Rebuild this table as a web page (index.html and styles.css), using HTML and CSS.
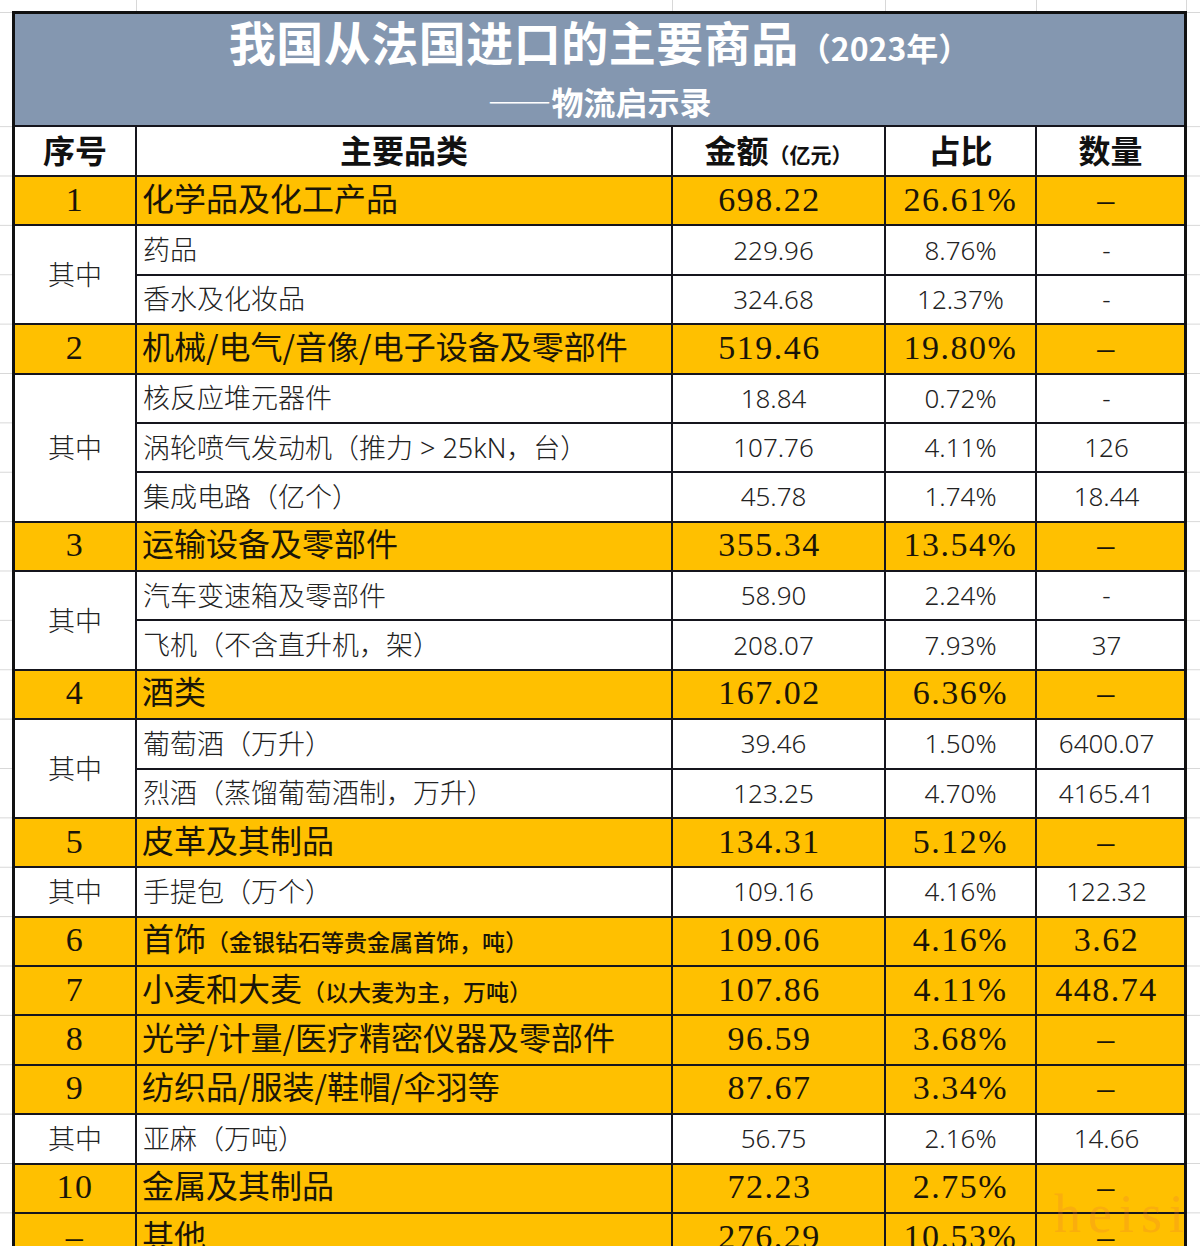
FILE: index.html
```html
<!DOCTYPE html>
<html lang="zh-CN">
<head>
<meta charset="utf-8">
<title>我国从法国进口的主要商品（2023年）</title>
<link rel="stylesheet" href="styles.css">
</head>
<body>
<div class="sheet">
  <div class="topstrip">
    <span class="g1"></span><span class="g2"></span><span class="g3"></span><span class="g4"></span><span class="g5"></span>
  </div>
  <table class="report">
    <colgroup>
      <col class="w1"><col class="w2"><col class="w3"><col class="w4"><col class="w5">
    </colgroup>
    <thead>
      <tr class="title-row">
        <th colspan="5">
          <div class="title">我国从法国进口的主要商品<span class="year">（2023年）</span></div>
          <div class="subtitle">——物流启示录</div>
        </th>
      </tr>
      <tr class="head-row">
        <th>序号</th>
        <th>主要品类</th>
        <th>金额<span class="unit">（亿元）</span></th>
        <th>占比</th>
        <th>数量</th>
      </tr>
    </thead>
    <tbody>
      <tr class="major"><td class="idx">1</td><td class="name">化学品及化工产品</td><td class="num amt">698.22</td><td class="num">26.61%</td><td class="num qty">–</td></tr>
      <tr class="sub"><td class="qz" rowspan="2">其中</td><td class="name">药品</td><td class="num amt">229.96</td><td class="num">8.76%</td><td class="num qty">-</td></tr>
      <tr class="sub"><td class="name">香水及化妆品</td><td class="num amt">324.68</td><td class="num">12.37%</td><td class="num qty">-</td></tr>

      <tr class="major"><td class="idx">2</td><td class="name">机械/电气/音像/电子设备及零部件</td><td class="num amt">519.46</td><td class="num">19.80%</td><td class="num qty">–</td></tr>
      <tr class="sub"><td class="qz" rowspan="3">其中</td><td class="name">核反应堆元器件</td><td class="num amt">18.84</td><td class="num">0.72%</td><td class="num qty">-</td></tr>
      <tr class="sub"><td class="name">涡轮喷气发动机（推力 &gt; 25kN，台）</td><td class="num amt">107.76</td><td class="num">4.11%</td><td class="num qty">126</td></tr>
      <tr class="sub"><td class="name">集成电路（亿个）</td><td class="num amt">45.78</td><td class="num">1.74%</td><td class="num qty">18.44</td></tr>

      <tr class="major"><td class="idx">3</td><td class="name">运输设备及零部件</td><td class="num amt">355.34</td><td class="num">13.54%</td><td class="num qty">–</td></tr>
      <tr class="sub"><td class="qz" rowspan="2">其中</td><td class="name">汽车变速箱及零部件</td><td class="num amt">58.90</td><td class="num">2.24%</td><td class="num qty">-</td></tr>
      <tr class="sub"><td class="name">飞机（不含直升机，架）</td><td class="num amt">208.07</td><td class="num">7.93%</td><td class="num qty">37</td></tr>

      <tr class="major"><td class="idx">4</td><td class="name">酒类</td><td class="num amt">167.02</td><td class="num">6.36%</td><td class="num qty">–</td></tr>
      <tr class="sub"><td class="qz" rowspan="2">其中</td><td class="name">葡萄酒（万升）</td><td class="num amt">39.46</td><td class="num">1.50%</td><td class="num qty">6400.07</td></tr>
      <tr class="sub"><td class="name">烈酒（蒸馏葡萄酒制，万升）</td><td class="num amt">123.25</td><td class="num">4.70%</td><td class="num qty">4165.41</td></tr>

      <tr class="major"><td class="idx">5</td><td class="name">皮革及其制品</td><td class="num amt">134.31</td><td class="num">5.12%</td><td class="num qty">–</td></tr>
      <tr class="sub"><td class="qz">其中</td><td class="name">手提包（万个）</td><td class="num amt">109.16</td><td class="num">4.16%</td><td class="num qty">122.32</td></tr>

      <tr class="major"><td class="idx">6</td><td class="name">首饰<span class="note">（金银钻石等贵金属首饰，吨）</span></td><td class="num amt">109.06</td><td class="num">4.16%</td><td class="num qty">3.62</td></tr>
      <tr class="major"><td class="idx">7</td><td class="name">小麦和大麦<span class="note">（以大麦为主，万吨）</span></td><td class="num amt">107.86</td><td class="num">4.11%</td><td class="num qty">448.74</td></tr>
      <tr class="major"><td class="idx">8</td><td class="name">光学/计量/医疗精密仪器及零部件</td><td class="num amt">96.59</td><td class="num">3.68%</td><td class="num qty">–</td></tr>
      <tr class="major"><td class="idx">9</td><td class="name">纺织品/服装/鞋帽/伞羽等</td><td class="num amt">87.67</td><td class="num">3.34%</td><td class="num qty">–</td></tr>
      <tr class="sub"><td class="qz">其中</td><td class="name">亚麻（万吨）</td><td class="num amt">56.75</td><td class="num">2.16%</td><td class="num qty">14.66</td></tr>

      <tr class="major"><td class="idx">10</td><td class="name">金属及其制品</td><td class="num amt">72.23</td><td class="num">2.75%</td><td class="num qty">–</td></tr>
      <tr class="major"><td class="idx">–</td><td class="name">其他</td><td class="num amt">276.29</td><td class="num">10.53%</td><td class="num qty">–</td></tr>
    </tbody>
  </table>
  <div class="watermark">heisi</div>
</div>
</body>
</html>
```

FILE: styles.css
```css
* { box-sizing: border-box; }

html, body {
  margin: 0;
  padding: 0;
}

body {
  width: 1200px;
  height: 1246px;
  overflow: hidden;
  background: #fff;
  font-family: "Noto Sans CJK SC", "Noto Sans", sans-serif;
  color: #111;
}

.sheet {
  position: relative;
  height: 1246px;
  background-image:
    linear-gradient(#d8d8d8, #d8d8d8),
    linear-gradient(#fff, #fff),
    linear-gradient(to bottom, transparent 48.38px, #d8d8d8 48.38px);
  background-size: 100% 1px, 100% 125px, 100% 49.38px;
  background-position: 0 12px, 0 0, 0 -21.02px;
  background-repeat: no-repeat, no-repeat, repeat;
}

/* spreadsheet gridlines above the table */
.topstrip {
  display: flex;
  height: 11px;
}
.topstrip span {
  height: 11px;
  border-right: 1px solid #d8d8d8;
}
.topstrip .g1 { width: 137px; }
.topstrip .g2 { width: 536px; }
.topstrip .g3 { width: 213px; }
.topstrip .g4 { width: 151px; }
.topstrip .g5 { width: 150px; }

.report {
  margin-left: 12px;
  width: 1175px;
  table-layout: fixed;
  border-collapse: separate;
  border-spacing: 0;
  border: 3px solid #111;
  border-bottom: none;
}

.w1 { width: 122px; }
.w2 { width: 536px; }
.w3 { width: 213px; }
.w4 { width: 151px; }
.w5 { width: 147px; }

.report th,
.report td {
  padding: 0;
  border-right: 2px solid #15151d;
  border-bottom: 2px solid #15151d;
  white-space: nowrap;
}
.report tr > :last-child { border-right: none; }

/* title */
.report .title-row th {
  height: 113px;
  background: #8497b0;
  color: #fff;
  vertical-align: top;
  padding-top: 0;
  font-weight: 700;
  text-align: center;
}
.title {
  font-size: 47px;
  line-height: 54px;
  letter-spacing: 0.5px;
}
.title .year {
  font-size: 32px;
  letter-spacing: 0;
}
.subtitle {
  margin-top: 7px;
  font-size: 32px;
  line-height: 40px;
  letter-spacing: 0;
}

/* column header */
.report .head-row th {
  height: 50px;
  padding-bottom: 5px;
  background: #fff;
  font-size: 32px;
  font-weight: 700;
  color: #111;
  text-align: center;
  vertical-align: middle;
  line-height: 1;
}
.head-row .unit {
  font-size: 21px;
}

/* data rows */
.report tbody tr { height: 49.38px; }

.report td {
  vertical-align: middle;
  line-height: 1;
}

.major td {
  background: #ffc000;
  color: #1a1508;
}
.report .major .name {
  font-size: 32px;
  padding-left: 5px;
  padding-bottom: 8px;
  text-align: left;
}
.major .note {
  font-size: 23px;
  font-weight: 500;
}
.report .major .idx,
.report .major .num {
  font-family: "Liberation Serif", serif;
  font-size: 34px;
  letter-spacing: 1.5px;
  text-align: center;
  padding-bottom: 2px;
}

.sub td {
  background: #fff;
  color: #222;
}
.report .sub .name {
  font-family: "Noto Sans", "Noto Sans CJK SC", sans-serif;
  font-weight: 300;
  font-size: 27px;
  padding-left: 6px;
  padding-bottom: 1px;
  text-align: left;
}
.report .sub .num {
  font-family: "Noto Sans", "Noto Sans CJK SC", sans-serif;
  font-weight: 300;
  font-size: 26px;
  text-align: center;
  padding-bottom: 1px;
}
.report .qz {
  background: #fff;
  font-family: "Noto Sans CJK SC", sans-serif;
  font-weight: 300;
  font-size: 27px;
  color: #222;
  text-align: center;
  padding-bottom: 2px;
}

.report .major .amt { padding-right: 18px; }
.report .sub .amt { padding-right: 10px; }
.report .major .qty,
.report .sub .qty { padding-right: 8px; }

.watermark {
  position: absolute;
  left: 1054px;
  top: 1184px;
  font-family: "Liberation Serif", serif;
  font-size: 54px;
  letter-spacing: 7px;
  line-height: 60px;
  color: rgba(235, 120, 50, 0.25);
  pointer-events: none;
}
```
